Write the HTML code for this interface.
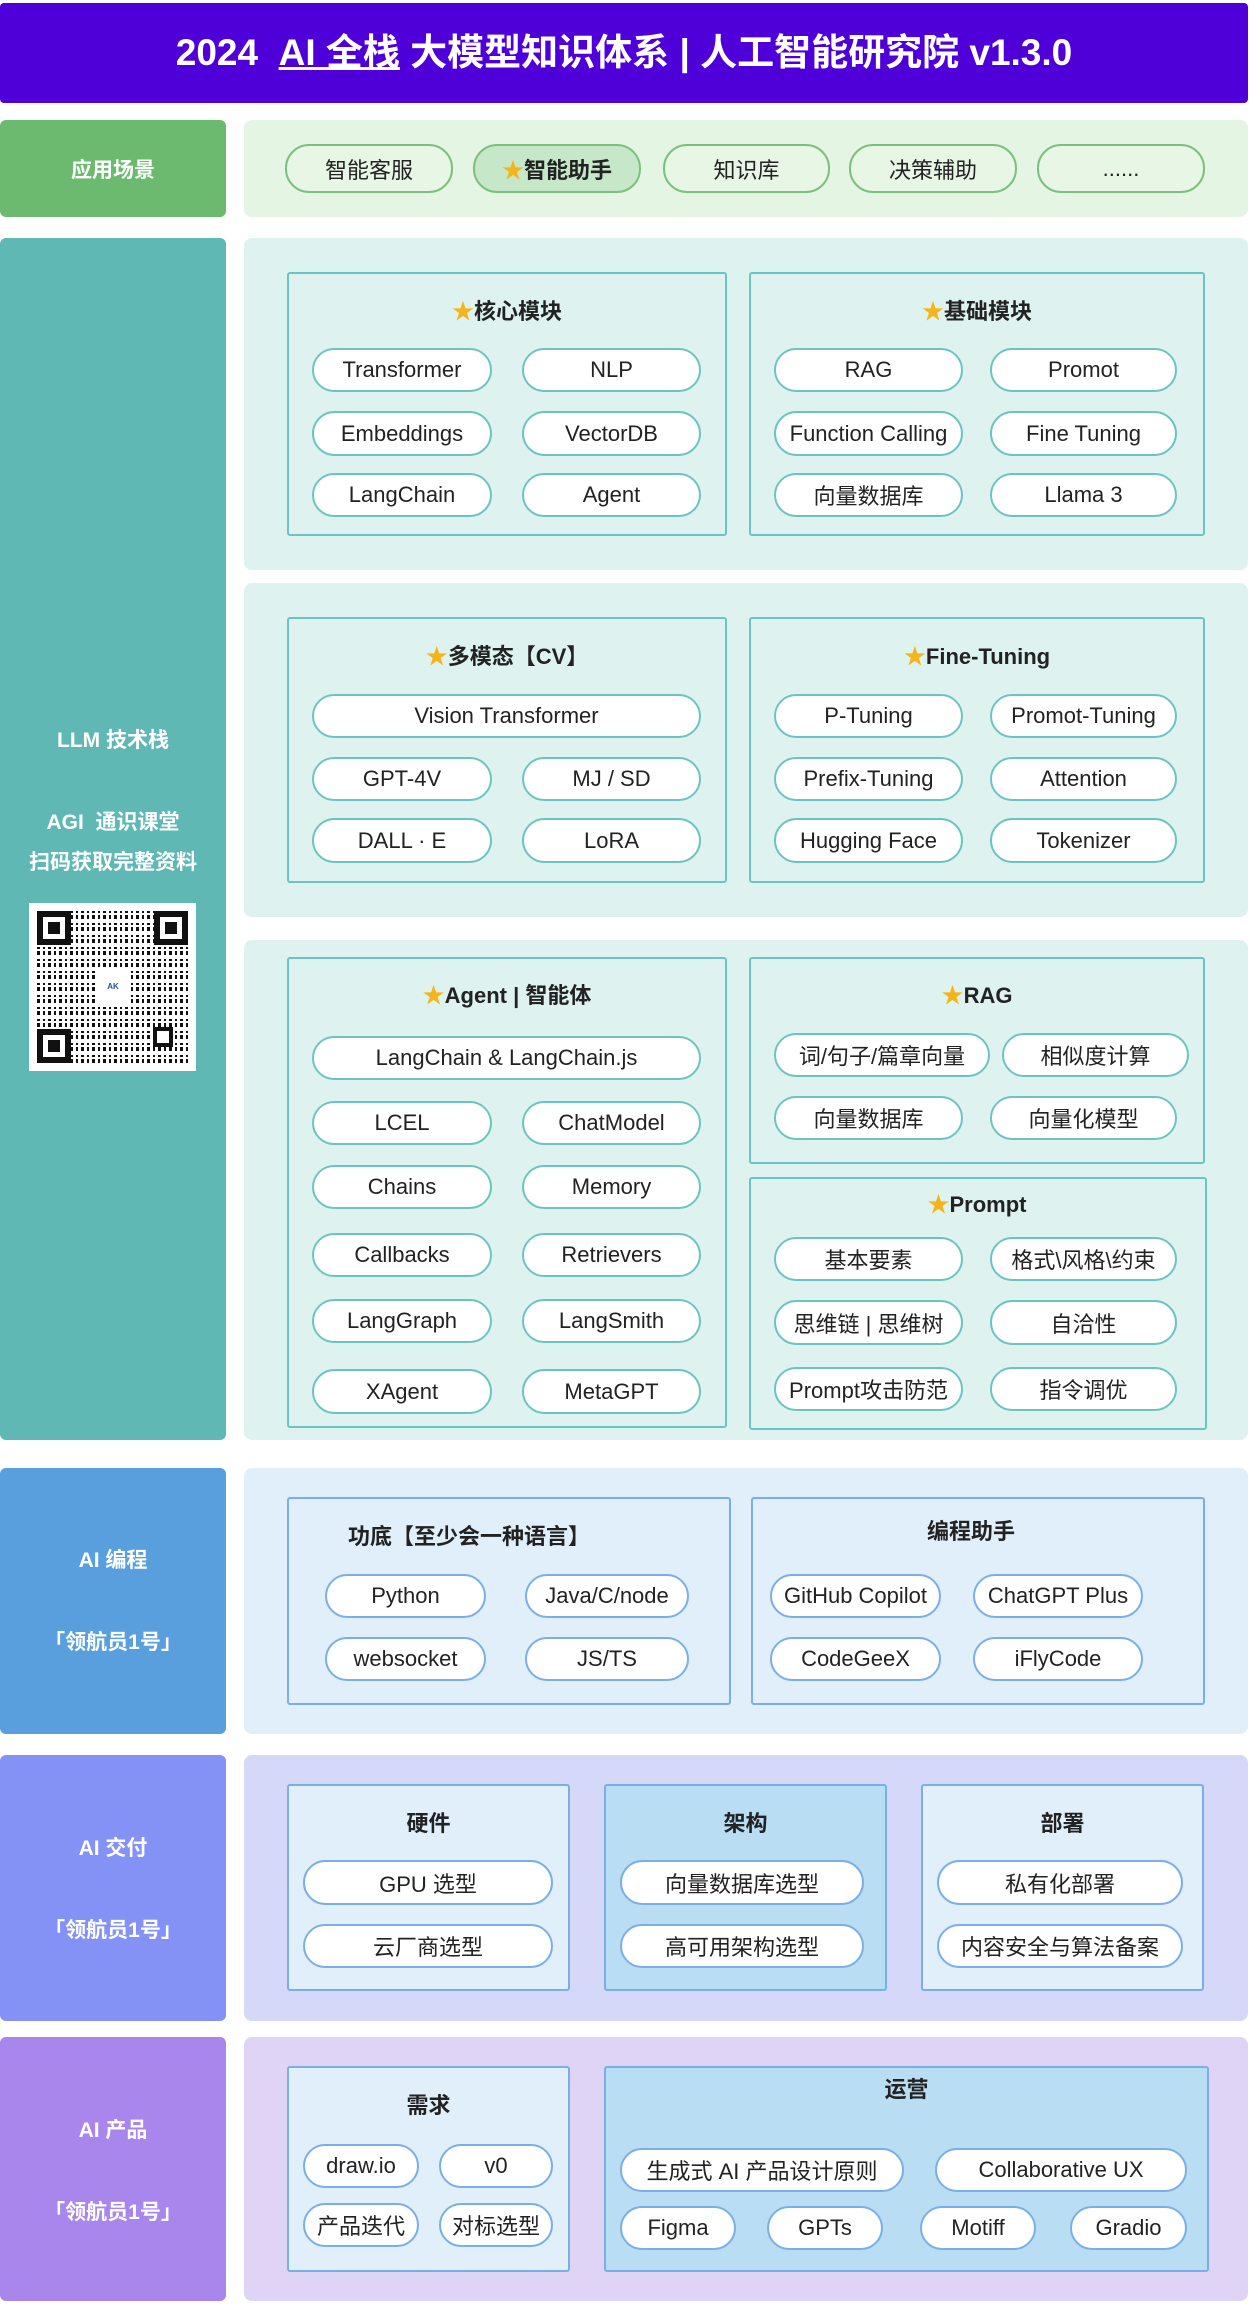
<!DOCTYPE html>
<html><head><meta charset="utf-8"><style>
*{margin:0;padding:0;box-sizing:border-box}
body{width:1252px;height:2306px;background:#fff;position:relative;font-family:"Liberation Sans","Noto Sans CJK SC",sans-serif;color:#222;overflow:hidden}
.a{position:absolute}
.hdr{left:0;top:3px;width:1248px;height:100px;background:#4f00d9;border-radius:4px;color:#fff;font-weight:bold;font-size:37px;line-height:100px;text-align:center;white-space:nowrap}
.lab{position:absolute;left:0;width:226px;border-radius:6px;color:#fff;font-weight:bold;font-size:21px;text-align:center}
.lab div{position:absolute;left:0;width:100%;text-align:center}
.bg{position:absolute;left:244px;width:1004px;border-radius:8px}
.pn{position:absolute;border:2px solid #6cc4c0;border-radius:3px}
.tt{position:absolute;font-weight:bold;font-size:22px;text-align:center;color:#222}
.p{position:absolute;border:2px solid #6cc4c0;border-radius:24px;background:#fff;display:flex;align-items:center;justify-content:center;font-size:22px;white-space:nowrap;color:#222}
.b .p,.b.p{border-color:#7aaee6}
.b.pn{border-color:#7aaee6}
.g{border-color:#7cc07f;background:#e8f6e6}
.star{color:#f3b51b;font-size:22px}
</style></head><body>
<div class="a hdr">2024&nbsp;&nbsp;<u>AI 全栈</u>&nbsp;大模型知识体系 | 人工智能研究院 v1.3.0</div>

<!-- row1 -->
<div class="lab" style="top:120px;height:97px;background:#6bba6f"><div style="top:34px">应用场景</div></div>
<div class="bg" style="top:120px;height:97px;background:#e5f5e3"></div>
<div class="p g" style="left:285px;top:144px;width:168px;height:49px">智能客服</div>
<div class="p g" style="left:473px;top:144px;width:168px;height:49px;background:#c6e8c8;font-weight:bold"><span class="star">★</span>智能助手</div>
<div class="p g" style="left:663px;top:144px;width:167px;height:49px">知识库</div>
<div class="p g" style="left:849px;top:144px;width:168px;height:49px">决策辅助</div>
<div class="p g" style="left:1037px;top:144px;width:168px;height:49px">......</div>

<!-- LLM -->
<div class="lab" style="top:238px;height:1202px;background:#5fb8b3">
<div style="top:486px">LLM 技术栈</div>
<div style="top:568px">AGI&nbsp; 通识课堂</div>
<div style="top:608px">扫码获取完整资料</div>
</div>
<div class="a" style="left:29px;top:903px;width:167px;height:168px;background:#fff;padding:8px">
<div style="width:151px;height:152px;position:relative;background:
repeating-linear-gradient(90deg,transparent 0 3px,#fff 3px 6px,transparent 6px 8px,#fff 8px 11px),
repeating-linear-gradient(0deg,#111 0 4px,#fff 4px 6px,#111 6px 8px,#fff 8px 12px);">
<div class="a" style="left:0;top:0;width:34px;height:34px;border:6px solid #111;background:#fff"><div style="margin:5px;width:12px;height:12px;background:#111"></div></div>
<div class="a" style="right:0;top:0;width:34px;height:34px;border:6px solid #111;background:#fff"><div style="margin:5px;width:12px;height:12px;background:#111"></div></div>
<div class="a" style="left:0;bottom:0;width:34px;height:34px;border:6px solid #111;background:#fff"><div style="margin:5px;width:12px;height:12px;background:#111"></div></div>
<div class="a" style="left:116px;top:116px;width:20px;height:20px;border:4px solid #111;background:#fff"></div>
<div class="a" style="left:58px;top:60px;width:36px;height:32px;background:#fff;color:#2a4fa0;font-size:8px;font-weight:bold;text-align:center;line-height:32px">AK</div>
</div></div>

<div class="bg" style="top:238px;height:332px;background:#def3f0"></div>
<div class="bg" style="top:583px;height:334px;background:#def3f0"></div>
<div class="bg" style="top:940px;height:500px;background:#def3f0"></div>

<!-- box1 -->
<div class="pn" style="left:287px;top:272px;width:440px;height:264px"></div>
<div class="pn" style="left:749px;top:272px;width:456px;height:264px"></div>
<div class="tt" style="left:287px;top:294px;width:440px"><span class="star">★</span>核心模块</div>
<div class="tt" style="left:749px;top:294px;width:456px"><span class="star">★</span>基础模块</div>
<div class="p" style="left:312px;top:348px;width:180px;height:44px">Transformer</div>
<div class="p" style="left:522px;top:348px;width:179px;height:44px">NLP</div>
<div class="p" style="left:312px;top:411px;width:180px;height:45px">Embeddings</div>
<div class="p" style="left:522px;top:411px;width:179px;height:45px">VectorDB</div>
<div class="p" style="left:312px;top:473px;width:180px;height:44px">LangChain</div>
<div class="p" style="left:522px;top:473px;width:179px;height:44px">Agent</div>
<div class="p" style="left:774px;top:348px;width:189px;height:44px">RAG</div>
<div class="p" style="left:990px;top:348px;width:187px;height:44px">Promot</div>
<div class="p" style="left:774px;top:411px;width:189px;height:45px">Function Calling</div>
<div class="p" style="left:990px;top:411px;width:187px;height:45px">Fine Tuning</div>
<div class="p" style="left:774px;top:473px;width:189px;height:44px">向量数据库</div>
<div class="p" style="left:990px;top:473px;width:187px;height:44px">Llama 3</div>

<!-- box2 -->
<div class="pn" style="left:287px;top:617px;width:440px;height:266px"></div>
<div class="pn" style="left:749px;top:617px;width:456px;height:266px"></div>
<div class="tt" style="left:287px;top:639px;width:440px"><span class="star">★</span>多模态【CV】</div>
<div class="tt" style="left:749px;top:639px;width:456px"><span class="star">★</span>Fine-Tuning</div>
<div class="p" style="left:312px;top:694px;width:389px;height:44px">Vision Transformer</div>
<div class="p" style="left:312px;top:757px;width:180px;height:44px">GPT-4V</div>
<div class="p" style="left:522px;top:757px;width:179px;height:44px">MJ / SD</div>
<div class="p" style="left:312px;top:818px;width:180px;height:45px">DALL · E</div>
<div class="p" style="left:522px;top:818px;width:179px;height:45px">LoRA</div>
<div class="p" style="left:774px;top:694px;width:189px;height:44px">P-Tuning</div>
<div class="p" style="left:990px;top:694px;width:187px;height:44px">Promot-Tuning</div>
<div class="p" style="left:774px;top:757px;width:189px;height:44px">Prefix-Tuning</div>
<div class="p" style="left:990px;top:757px;width:187px;height:44px">Attention</div>
<div class="p" style="left:774px;top:818px;width:189px;height:45px">Hugging Face</div>
<div class="p" style="left:990px;top:818px;width:187px;height:45px">Tokenizer</div>

<!-- box3 -->
<div class="pn" style="left:287px;top:957px;width:440px;height:471px"></div>
<div class="pn" style="left:749px;top:957px;width:456px;height:207px"></div>
<div class="pn" style="left:749px;top:1177px;width:458px;height:253px"></div>
<div class="tt" style="left:287px;top:978px;width:440px"><span class="star">★</span>Agent | 智能体</div>
<div class="tt" style="left:749px;top:978px;width:456px"><span class="star">★</span>RAG</div>
<div class="tt" style="left:749px;top:1187px;width:456px"><span class="star">★</span>Prompt</div>
<div class="p" style="left:312px;top:1036px;width:389px;height:44px">LangChain &amp; LangChain.js</div>
<div class="p" style="left:312px;top:1101px;width:180px;height:44px">LCEL</div>
<div class="p" style="left:522px;top:1101px;width:179px;height:44px">ChatModel</div>
<div class="p" style="left:312px;top:1165px;width:180px;height:44px">Chains</div>
<div class="p" style="left:522px;top:1165px;width:179px;height:44px">Memory</div>
<div class="p" style="left:312px;top:1233px;width:180px;height:44px">Callbacks</div>
<div class="p" style="left:522px;top:1233px;width:179px;height:44px">Retrievers</div>
<div class="p" style="left:312px;top:1299px;width:180px;height:44px">LangGraph</div>
<div class="p" style="left:522px;top:1299px;width:179px;height:44px">LangSmith</div>
<div class="p" style="left:312px;top:1369px;width:180px;height:45px">XAgent</div>
<div class="p" style="left:522px;top:1369px;width:179px;height:45px">MetaGPT</div>
<div class="p" style="left:774px;top:1033px;width:216px;height:44px">词/句子/篇章向量</div>
<div class="p" style="left:1002px;top:1033px;width:187px;height:44px">相似度计算</div>
<div class="p" style="left:774px;top:1096px;width:189px;height:44px">向量数据库</div>
<div class="p" style="left:990px;top:1096px;width:187px;height:44px">向量化模型</div>
<div class="p" style="left:774px;top:1237px;width:189px;height:44px">基本要素</div>
<div class="p" style="left:990px;top:1237px;width:187px;height:44px">格式\风格\约束</div>
<div class="p" style="left:774px;top:1300px;width:189px;height:45px">思维链 | 思维树</div>
<div class="p" style="left:990px;top:1300px;width:187px;height:45px">自洽性</div>
<div class="p" style="left:774px;top:1367px;width:189px;height:44px">Prompt攻击防范</div>
<div class="p" style="left:990px;top:1367px;width:187px;height:44px">指令调优</div>

<!-- AI 编程 -->
<div class="lab" style="top:1468px;height:266px;background:#5a9fdd"><div style="top:76px">AI 编程</div><div style="top:158px">「领航员1号」</div></div>
<div class="bg" style="top:1468px;height:266px;background:#e0eff9"></div>
<div class="pn b" style="left:287px;top:1497px;width:444px;height:208px"></div>
<div class="pn b" style="left:751px;top:1497px;width:454px;height:208px"></div>
<div class="tt" style="left:348px;top:1519px">功底【至少会一种语言】</div>
<div class="tt" style="left:751px;top:1514px;width:440px">编程助手</div>
<div class="b">
<div class="p" style="left:325px;top:1574px;width:161px;height:44px">Python</div>
<div class="p" style="left:525px;top:1574px;width:164px;height:44px">Java/C/node</div>
<div class="p" style="left:325px;top:1637px;width:161px;height:44px">websocket</div>
<div class="p" style="left:525px;top:1637px;width:164px;height:44px">JS/TS</div>
<div class="p" style="left:770px;top:1574px;width:171px;height:44px">GitHub Copilot</div>
<div class="p" style="left:973px;top:1574px;width:170px;height:44px">ChatGPT Plus</div>
<div class="p" style="left:770px;top:1637px;width:171px;height:44px">CodeGeeX</div>
<div class="p" style="left:973px;top:1637px;width:170px;height:44px">iFlyCode</div>
</div>

<!-- AI 交付 -->
<div class="lab" style="top:1755px;height:266px;background:#8492f5"><div style="top:77px">AI 交付</div><div style="top:159px">「领航员1号」</div></div>
<div class="bg" style="top:1755px;height:266px;background:#d5d8f8"></div>
<div class="pn b" style="left:287px;top:1784px;width:283px;height:207px;background:#e1effa"></div>
<div class="pn b" style="left:604px;top:1784px;width:283px;height:207px;background:#b9ddf2"></div>
<div class="pn b" style="left:921px;top:1784px;width:283px;height:207px;background:#e1effa"></div>
<div class="tt" style="left:287px;top:1806px;width:283px">硬件</div>
<div class="tt" style="left:604px;top:1806px;width:283px">架构</div>
<div class="tt" style="left:921px;top:1806px;width:283px">部署</div>
<div class="b">
<div class="p" style="left:303px;top:1860px;width:250px;height:45px">GPU 选型</div>
<div class="p" style="left:303px;top:1924px;width:250px;height:44px">云厂商选型</div>
<div class="p" style="left:620px;top:1860px;width:244px;height:45px">向量数据库选型</div>
<div class="p" style="left:620px;top:1924px;width:244px;height:44px">高可用架构选型</div>
<div class="p" style="left:937px;top:1860px;width:246px;height:45px">私有化部署</div>
<div class="p" style="left:937px;top:1924px;width:246px;height:44px">内容安全与算法备案</div>
</div>

<!-- AI 产品 -->
<div class="lab" style="top:2037px;height:264px;background:#a986ec"><div style="top:77px">AI 产品</div><div style="top:159px">「领航员1号」</div></div>
<div class="bg" style="top:2037px;height:264px;background:#dfd4f6"></div>
<div class="pn b" style="left:287px;top:2066px;width:283px;height:206px;background:#e1effa"></div>
<div class="pn b" style="left:604px;top:2066px;width:605px;height:206px;background:#b9ddf2"></div>
<div class="tt" style="left:287px;top:2088px;width:283px">需求</div>
<div class="tt" style="left:604px;top:2072px;width:605px">运营</div>
<div class="b">
<div class="p" style="left:303px;top:2144px;width:116px;height:44px">draw.io</div>
<div class="p" style="left:439px;top:2144px;width:114px;height:44px">v0</div>
<div class="p" style="left:303px;top:2203px;width:116px;height:44px">产品迭代</div>
<div class="p" style="left:439px;top:2203px;width:114px;height:44px">对标选型</div>
<div class="p" style="left:620px;top:2148px;width:284px;height:44px">生成式 AI 产品设计原则</div>
<div class="p" style="left:935px;top:2148px;width:252px;height:44px">Collaborative UX</div>
<div class="p" style="left:620px;top:2206px;width:116px;height:44px">Figma</div>
<div class="p" style="left:767px;top:2206px;width:116px;height:44px">GPTs</div>
<div class="p" style="left:920px;top:2206px;width:116px;height:44px">Motiff</div>
<div class="p" style="left:1070px;top:2206px;width:117px;height:44px">Gradio</div>
</div>
</body></html>
